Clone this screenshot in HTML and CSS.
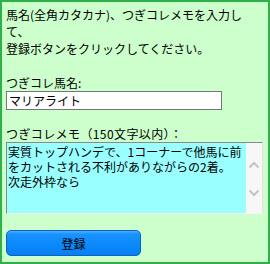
FILE: index.html
```html
<!DOCTYPE html>
<html lang="ja">
<head>
<meta charset="utf-8">
<link rel="stylesheet" href="styles.css">
</head>
<body>
<div class="panel">
  <div class="intro">
    <span class="line">馬名(全角カタカナ)、つぎコレメモを入力し</span>
    <span class="line">て、</span>
    <span class="line">登録ボタンをクリックしてください。</span>
  </div>
  <label class="label label-name" for="horse">つぎコレ馬名:</label>
  <input class="name-input" id="horse" type="text" value="マリアライト">
  <label class="label label-memo" for="memo">つぎコレメモ（150文字以内）：</label>
  <div class="memo-box">
    <textarea class="memo" id="memo">実質トップハンデで、1コーナーで他馬に前をカットされる不利がありながらの2着。
次走外枠なら</textarea>
    <div class="scrollbar">
      <svg class="arrow" width="12" height="8" viewBox="0 0 12 8"><path d="M1.5 6.5 L6 2 L10.5 6.5" fill="none" stroke="#c4c4c4" stroke-width="2"/></svg>
      <svg class="arrow" width="12" height="8" viewBox="0 0 12 8"><path d="M1.5 1.5 L6 6 L10.5 1.5" fill="none" stroke="#c4c4c4" stroke-width="2"/></svg>
    </div>
  </div>
  <button class="submit" type="button">登録</button>
</div>
</body>
</html>
```

FILE: styles.css
```css
html, body {
  margin: 0;
  padding: 0;
}
body {
  font-family: "Noto Sans CJK JP", "Liberation Sans", sans-serif;
  font-size: 12px;
  color: #000;
}
.panel {
  box-sizing: border-box;
  width: 270px;
  height: 264px;
  border: 2px solid #2fb04a;
  background: #ccffcc;
  padding: 4px 4px 0 4px;
  display: flex;
  flex-direction: column;
  align-items: flex-start;
}
.intro {
  display: flex;
  flex-direction: column;
}
.line {
  display: block;
  line-height: 17px;
  height: 17px;
  white-space: nowrap;
}
.label {
  display: block;
  line-height: 17px;
}
.label-name {
  margin-top: 17px;
}
.name-input {
  box-sizing: border-box;
  width: 216px;
  height: 19px;
  margin: 0;
  padding: 0 2px;
  border: 1px solid #767676;
  background: #fff;
  font-family: "Noto Sans CJK JP", sans-serif;
  font-size: 12px;
  color: #000;
  outline: none;
}
.label-memo {
  margin-top: 15px;
  letter-spacing: 0.4px;
}
.memo-box {
  box-sizing: border-box;
  width: 257px;
  height: 72px;
  display: flex;
  border: 1px solid;
  border-color: #8a8a8a #e4e4e4 #f4f4f4 #8a8a8a;
  background: #f7f7f7;
}
.memo {
  flex: 1;
  min-width: 0;
  margin: 0;
  padding: 1px 0 0 1px;
  border: 0;
  background: #99ffff;
  font-family: "Noto Sans CJK JP", sans-serif;
  font-size: 12px;
  line-height: 15px;
  letter-spacing: 0;
  color: #000;
  resize: none;
  overflow: hidden;
  outline: none;
}
.scrollbar {
  width: 16px;
  flex: none;
  display: flex;
  flex-direction: column;
  align-items: center;
  justify-content: space-between;
  padding: 18px 0 16px;
  box-sizing: border-box;
  background: #f7f7f7;
}
.arrow {
  display: block;
}
.submit {
  box-sizing: border-box;
  margin-top: 16px;
  width: 135px;
  height: 26px;
  border: 1px solid #0a5fc8;
  border-radius: 5px;
  background: linear-gradient(#4fb0ff 0, #1a93ff 3px, #0a88fb 60%, #0a80f0 100%);
  font-family: "Noto Sans CJK JP", sans-serif;
  font-size: 12px;
  color: #000;
  padding: 0;
}
```
